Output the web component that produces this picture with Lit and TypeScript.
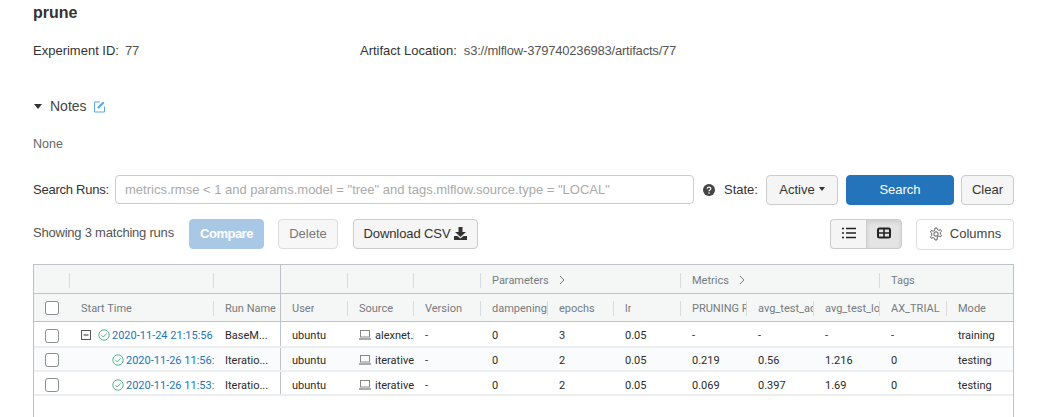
import { css, html, LitElement } from 'lit'
import { customElement } from 'lit/decorators.js'

type Run = {
  time: string
  child: boolean
  name: string
  source: string
  vals: string[]
  mode: string
}

const RUNS: Run[] = [
  { time: '2020-11-24 21:15:56', child: false, name: 'BaseM...', source: 'alexnet.py', vals: ['0', '3', '0.05', '-', '-', '-', '-'], mode: 'training' },
  { time: '2020-11-26 11:56:33', child: true, name: 'Iteratio...', source: 'iterative_', vals: ['0', '2', '0.05', '0.219', '0.56', '1.216', '0'], mode: 'testing' },
  { time: '2020-11-26 11:53:07', child: true, name: 'Iteratio...', source: 'iterative_', vals: ['0', '2', '0.05', '0.069', '0.397', '1.69', '0'], mode: 'testing' },
]

const okIcon = html`<svg class="ok" viewBox="0 0 12 12" width="12" height="12">
  <circle cx="6" cy="6" r="5.2" fill="none" stroke="#52b788" stroke-width="1"/>
  <path d="M3.4 6.1 5.3 8 8.7 4.4" fill="none" stroke="#52b788" stroke-width="1"/>
</svg>`

const laptop = html`<svg class="laptop" viewBox="0 0 12 10" width="12" height="10">
  <rect x="1.500" y=".5" width="9" height="6.500" fill="none" stroke="#888"/>
  <path d="M0 9h12" stroke="#aaa" stroke-width="2"/>
</svg>`

@customElement('app-root')
export class AppRoot extends LitElement {
  static styles = css`
    :host {
      display: block;
      height: 417px;
      overflow: hidden;
      padding: 0 23px 0 33px;
      font-family: 'Liberation Sans', Arial, sans-serif;
      font-size: 13px;
      color: #333;
      background: #fff;
    }
    h1 {
      margin: 0;
      padding-top: 4px;
      font-size: 16px;
      line-height: 18px;
      font-weight: 700;
      color: #333;
    }
    .meta {
      display: flex;
      margin-top: 20px;
      height: 18px;
      line-height: 18px;
    }
    .meta .id { width: 327px; }
    .meta b { font-weight: 400; }
    .meta span { color: #555; margin-left: 6px; letter-spacing: -0.2px; }
    .meta .loc { margin-left: 7px; }
    .notes {
      display: flex;
      align-items: center;
      margin-top: 36px;
      height: 20px;
      font-size: 14px;
      color: #444;
    }
    .caret {
      width: 0;
      height: 0;
      border: 4.5px solid transparent;
      border-top: 5px solid #333;
      border-bottom: 0;
      margin: 0 8px 0 1px;
    }
    .notes svg { margin-left: 6px; }
    .none {
      margin-top: 19px;
      height: 18px;
      line-height: 18px;
      font-size: 12.500px;
      color: #666;
    }
    .search {
      display: flex;
      align-items: center;
      margin-top: 22px;
      height: 30px;
    }
    .search label {
      width: 82px;
      white-space: nowrap;
      letter-spacing: -0.25px;
      padding-bottom: 1px;
    }
    .input {
      box-sizing: border-box;
      width: 579px;
      height: 29px;
      margin-bottom: 1px;
      border: 1px solid #ccc;
      border-radius: 4px;
      padding-left: 9px;
      line-height: 27px;
      color: #aaa;
      white-space: nowrap;
      overflow: hidden;
    }
    .help { margin-left: 9px; flex: none; }
    .state { margin-left: 9px; width: 42px; flex: none; padding-bottom: 2px; box-sizing: content-box; }
    .btn {
      box-sizing: border-box;
      display: flex;
      align-items: center;
      justify-content: center;
      flex: none;
      height: 30px;
      padding-bottom: 2px;
      border: 1px solid #ccc;
      border-radius: 4px;
      background: #f5f5f5;
      color: #333;
      white-space: nowrap;
    }
    .active { width: 72px; }
    .active i {
      width: 0;
      height: 0;
      margin-left: 4px;
      border: 3.500px solid transparent;
      border-top: 4px solid #333;
      border-bottom: 0;
    }
    .primary {
      width: 108px;
      margin-left: 8px;
      background: #2374bb;
      border-color: #2374bb;
      color: #fff;
    }
    .clear { width: 53px; margin-left: 7px; }
    .actions {
      display: flex;
      align-items: flex-start;
      margin-top: 14px;
      height: 31px;
    }
    .count {
      width: 156px;
      color: #555;
      white-space: nowrap;
      line-height: 28px;
      letter-spacing: -0.22px;
    }
    .compare {
      width: 75px;
      background: #a8c8e6;
      border-color: #a8c8e6;
      color: #fff;
      font-weight: 700;
      letter-spacing: -0.5px;
    }
    .delete {
      width: 60px;
      margin-left: 14px;
      color: #777;
      border-color: #ddd;
      background: #f7f7f7;
    }
    .csv { width: 125px; margin-left: 15px; gap: 4px; letter-spacing: -0.1px; }
    .spacer { flex: 1; }
    .toggle { display: flex; }
    .toggle div {
      box-sizing: border-box;
      display: flex;
      align-items: center;
      justify-content: center;
      width: 36px;
      height: 30px;
      padding-bottom: 2px;
      border: 1px solid #ccc;
      background: #f5f5f5;
    }
    .toggle div:first-child { border-radius: 4px 0 0 4px; border-right: 0; }
    .toggle div:last-child {
      border-radius: 0 4px 4px 0;
      background: #e4e4e4;
      box-shadow: inset 0 2px 4px rgba(0, 0, 0, 0.1);
    }
    .columns {
      width: 98px;
      height: 31px;
      margin-left: 14px;
      gap: 7px;
      background: #fff;
      border-color: #ddd;
      color: #444;
    }
    .table {
      box-sizing: border-box;
      margin-top: 14px;
      width: 981px;
      height: 160px;
      border: 1px solid #bdc3c7;
      border-bottom: 0;
      font-family: Roboto, 'Noto Sans', sans-serif;
      font-size: 11px;
      color: #2b2b2b;
    }
    .row {
      display: grid;
      grid-template-columns: 36px 144px 67px 67px 66px 67px 67px 66px 67px 66px 67px 66px 67px 66px;
    }
    .head {
      box-sizing: border-box;
      background: #f5f7f7;
      color: #757b80;
      border-bottom: 1px solid #bdc3c7;
    }
    .head.top { height: 29px; }
    .head.sub { height: 28px; }
    .head .cell { display: flex; align-items: center; padding-top: 2px; }
    .head .cell::after {
      content: '';
      flex: none;
      width: 1px;
      height: 15px;
      margin-left: auto;
      background: #d9dcde;
    }
    .head .cell.last::after, .head .cell.pin::after, .head .cell.tags::after, .head .check-cell::after { display: none; }
    .head .cell.check-cell { padding-top: 0; }
    .cell {
      box-sizing: border-box;
      padding-left: 11px;
      overflow: hidden;
      white-space: nowrap;
    }
    .cell span.clip { overflow: hidden; flex: 0 1 auto; }
    .pin { border-right: 1px solid #bdc3c7; }
    .group.params, .group.metrics { grid-column: span 3; }
    .group.tags { grid-column: span 2; }
    .chev { margin-left: 10px; }
    .body {
      box-sizing: border-box;
      height: 24px;
      border-bottom: 2px solid #eceef0;
    }
    .body .cell { display: flex; align-items: center; padding-top: 2px; }
    .r0 { height: 26px; }
    .r0 .check { margin-top: 2px; }
    .r1 { background: #f9fbfd; }
    .r2 .cell { padding-top: 4px; }
    .check {
      box-sizing: border-box;
      display: block;
      flex: none;
      width: 14px;
      height: 14px;
      border: 1px solid #8a8f94;
      border-radius: 3px;
      background: #fff;
    }
    .check-cell { display: flex; align-items: center; }
    .time { color: #2374bb; overflow: hidden; padding-left: 2px; }
    .time-cell.cell { padding-left: 0; }
    .time-cell.child .ok { margin-left: 42px; }
    .time-cell .minus { margin-left: 11px; margin-right: 7px; flex: none; }
    .ok, .laptop { flex: none; }
    .src { overflow: hidden; margin-left: 4px; flex: 0 1 auto; }
  `

  private headCell(label: string, extra = '') {
    return html`<div class="cell ${extra}"><span class="clip">${label}</span></div>`
  }

  private groupHead(label: string, cls: string, chev: boolean) {
    return html`<div class="cell group ${cls}">
      <span>${label}</span>
      ${chev
        ? html`<svg class="chev" width="6" height="10" viewBox="0 0 6 10"><path d="M1 1l4 4-4 4" fill="none" stroke="#757b80"/></svg>`
        : ''}
    </div>`
  }

  private renderRun(r: Run, i: number) {
    return html`<div class="row body r${i}">
      <div class="cell check-cell"><i class="check"></i></div>
      <div class="cell time-cell ${r.child ? 'child' : ''}">
        ${r.child
          ? ''
          : html`<svg class="minus" width="10" height="10" viewBox="0 0 10 10">
              <rect x=".5" y=".5" width="9" height="9" fill="#fff" stroke="#555"/>
              <path d="M2.500 5h5" stroke="#333"/>
            </svg>`}
        ${okIcon}<span class="time">${r.time}</span>
      </div>
      <div class="cell pin">${r.name}</div>
      <div class="cell">ubuntu</div>
      <div class="cell">${laptop}<span class="src">${r.source}</span></div>
      <div class="cell">-</div>
      ${r.vals.map((v) => html`<div class="cell">${v}</div>`)}
      <div class="cell">${r.mode}</div>
    </div>`
  }

  render() {
    return html`
      <h1>prune</h1>
      <div class="meta">
        <div class="id"><b>Experiment ID:</b><span>77</span></div>
        <div><b>Artifact Location:</b><span class="loc">s3://mlflow-379740236983/artifacts/77</span></div>
      </div>
      <div class="notes">
        <i class="caret"></i>Notes
        <svg width="13" height="13" viewBox="0 0 13 13">
          <path d="M7 2H1.500v10h10V6.500" fill="none" stroke="#5aa9e6"/>
          <path d="M4.500 8.500V7L10 1.500l1.500 1.500L6 8.500z" fill="#5aa9e6"/>
        </svg>
      </div>
      <div class="none">None</div>

      <div class="search">
        <label>Search Runs:</label>
        <div class="input">metrics.rmse &lt; 1 and params.model = "tree" and tags.mlflow.source.type = "LOCAL"</div>
        <svg class="help" width="12" height="12" viewBox="0 0 12 12">
          <circle cx="6" cy="6" r="6" fill="#444"/>
          <path d="M4.200 4.700c0-2.200 3.600-2.200 3.600-.1 0 1.300-1.800 1.300-1.800 2.600" fill="none" stroke="#fff" stroke-width="1.200"/>
          <circle cx="6" cy="9" r=".8" fill="#fff"/>
        </svg>
        <span class="state">State:</span>
        <div class="btn active">Active<i></i></div>
        <div class="btn primary">Search</div>
        <div class="btn clear">Clear</div>
      </div>

      <div class="actions">
        <div class="count">Showing 3 matching runs</div>
        <div class="btn compare">Compare</div>
        <div class="btn delete">Delete</div>
        <div class="btn csv">
          Download CSV
          <svg width="13" height="13" viewBox="0 0 13 13">
            <path d="M4.500 0h4v5H12L6.500 10 1 5h3.500z" fill="#333"/>
            <path d="M0 9h3.500l3 2.500 3-2.500H13v4H0z" fill="#333"/>
          </svg>
        </div>
        <div class="spacer"></div>
        <div class="toggle">
          <div>
            <svg width="14" height="12" viewBox="0 0 14 12">
              <path d="M0 1.500h2M4 1.500h10M0 6h2M4 6h10M0 10.500h2M4 10.500h10" stroke="#222" stroke-width="1.600"/>
            </svg>
          </div>
          <div>
            <svg width="14" height="12" viewBox="0 0 14 12">
              <rect x="1" y="1.500" width="12" height="9" rx="1.500" fill="none" stroke="#222" stroke-width="2"/>
              <path d="M1 6h12M7 1v10" stroke="#222" stroke-width="1.600"/>
            </svg>
          </div>
        </div>
        <div class="btn columns">
          <svg width="14" height="14" viewBox="0 0 14 14">
            <circle cx="7" cy="7" r="2.200" fill="none" stroke="#555"/>
            <path d="M6 1h2l.4 1.700 1.500.7 1.600-.8 1.100 1.700-1.300 1.100v1.600l1.300 1.100-1.100 1.700-1.600-.8-1.500.7L8 13H6l-.4-1.700-1.500-.7-1.600.8-1.100-1.700 1.300-1.100V6.200L1.400 5.100l1.100-1.700 1.600.8 1.500-.7z" fill="none" stroke="#555" stroke-width=".9"/>
          </svg>
          Columns
        </div>
      </div>

      <div class="table">
        <div class="row head top">
          <div class="cell"></div>
          <div class="cell"></div>
          <div class="cell pin"></div>
          <div class="cell"></div>
          <div class="cell"></div>
          <div class="cell"></div>
          ${this.groupHead('Parameters', 'params', true)}
          ${this.groupHead('Metrics', 'metrics', true)}
          ${this.groupHead('Tags', 'tags', false)}
        </div>
        <div class="row head sub">
          <div class="cell check-cell"><i class="check"></i></div>
          ${this.headCell('Start Time')}
          ${this.headCell('Run Name', 'pin')}
          ${this.headCell('User')}
          ${this.headCell('Source')}
          ${this.headCell('Version')}
          ${this.headCell('dampening')}
          ${this.headCell('epochs')}
          ${this.headCell('lr')}
          ${this.headCell('PRUNING RATIO')}
          ${this.headCell('avg_test_acc')}
          ${this.headCell('avg_test_loss')}
          ${this.headCell('AX_TRIAL')}
          ${this.headCell('Mode', 'last')}
        </div>
        ${RUNS.map((r, i) => this.renderRun(r, i))}
      </div>
    `
  }
}
